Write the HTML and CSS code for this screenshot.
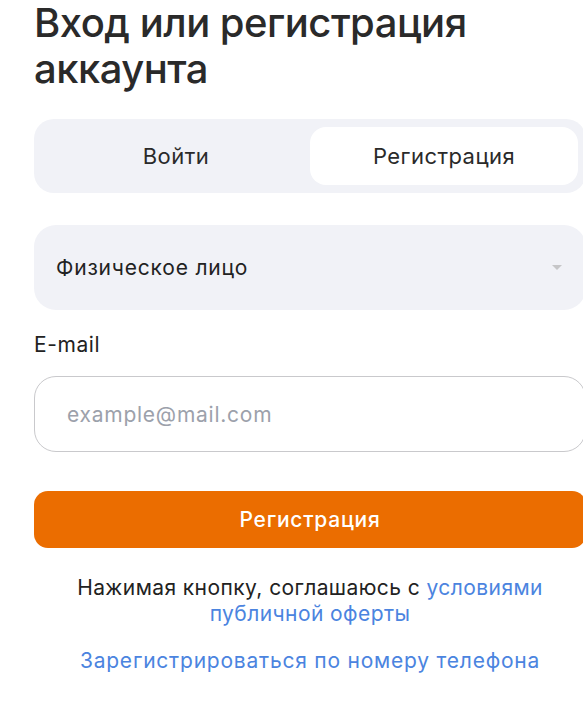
FILE: index.html
```html
<!DOCTYPE html>
<html lang="ru">
<head>
<meta charset="utf-8">
<title>Вход или регистрация</title>
<link rel="stylesheet" href="styles.css">
</head>
<body>
<div class="auth">
  <h1 class="auth-title">Вход или регистрация аккаунта</h1>
  <div class="tabs">
    <button class="tab">Войти</button>
    <button class="tab tab-active">Регистрация</button>
  </div>
  <div class="select">
    <span class="select-value">Физическое лицо</span>
    <span class="select-arrow"></span>
  </div>
  <label class="field-label" for="email">E-mail</label>
  <input class="field-input" id="email" type="text" placeholder="example@mail.com">
  <button class="submit">Регистрация</button>
  <p class="terms">Нажимая кнопку, соглашаюсь с <a href="#" class="link">условиями публичной оферты</a></p>
  <p class="alt"><a href="#" class="link">Зарегистрироваться по номеру телефона</a></p>
</div>
</body>
</html>
```
FILE: styles.css
```css
html, body {
  margin: 0;
  padding: 0;
  background: #ffffff;
  overflow: hidden;
}
body {
  font-family: "Inter", "Noto Sans", sans-serif;
  color: #242424;
}
.auth {
  width: 552px;
  padding-left: 34px;
  display: flex;
  flex-direction: column;
}
.auth-title {
  margin: 0;
  font-size: 40px;
  line-height: 46px;
  font-weight: 450;
  color: #2a2a2a;
  letter-spacing: -0.5px;
  padding-bottom: 2px;
}
.tabs {
  margin-top: 25px;
  background: #f1f2f7;
  border-radius: 20px;
  padding: 8px;
  display: grid;
  grid-template-columns: 1fr 1fr;
  height: 58px;
}
.tab {
  border: 0;
  background: transparent;
  font-family: inherit;
  font-size: 22px;
  letter-spacing: 0.45px;
  color: #2a2a2a;
  border-radius: 16px;
  cursor: pointer;
  padding: 0;
}
.tab-active {
  background: #ffffff;
}
.select {
  margin-top: 32px;
  height: 85px;
  background: #f1f2f7;
  border-radius: 22px;
  display: flex;
  align-items: center;
  justify-content: space-between;
  padding: 0 24px 0 22px;
  box-sizing: border-box;
}
.select-value {
  font-size: 21px;
  letter-spacing: 0.8px;
  color: #222222;
}
.select-arrow {
  width: 0;
  height: 0;
  border-left: 5px solid transparent;
  border-right: 5px solid transparent;
  border-top: 5px solid #c6c6c8;
}
.field-label {
  margin-top: 22px;
  font-size: 21px;
  line-height: 26px;
  letter-spacing: 0.6px;
  color: #222222;
}
.field-input {
  margin-top: 18px;
  height: 76px;
  box-sizing: border-box;
  border: 1px solid #c9c9cc;
  border-radius: 22px;
  padding: 0 32px;
  font-family: inherit;
  font-size: 21px;
  letter-spacing: 0.75px;
  color: #242424;
  outline: none;
  background: #fff;
}
.field-input::placeholder {
  color: #9ca1ab;
}
.submit {
  margin-top: 39px;
  height: 57px;
  border: 0;
  border-radius: 14px;
  background: #eb6d00;
  color: #ffffff;
  font-family: inherit;
  font-size: 21px;
  letter-spacing: 0.75px;
  font-weight: 500;
  cursor: pointer;
}
.terms {
  margin: 27px 0 0;
  text-align: center;
  font-size: 21px;
  line-height: 26px;
  letter-spacing: 0.42px;
  color: #222222;
  padding: 0 20px;
}
.alt {
  margin: 21px 0 0;
  text-align: center;
  font-size: 21px;
  line-height: 26px;
  letter-spacing: 0.78px;
}
.link {
  color: #4b84df;
  text-decoration: none;
}
```
